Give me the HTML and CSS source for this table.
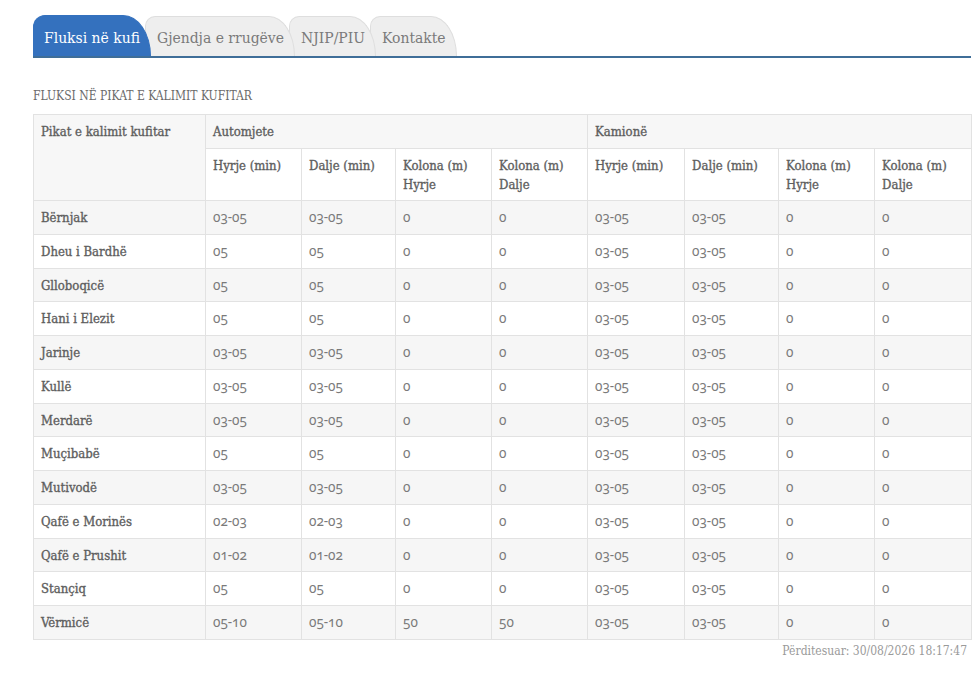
FILE: index.html
```html
<!DOCTYPE html>
<html lang="sq">
<head>
<meta charset="utf-8">
<title>Fluksi në kufi</title>
<link rel="stylesheet" href="styles.css">
</head>
<body>
<div class="page">
  <nav class="tabs">
    <a class="tab active">Fluksi në kufi</a>
    <a class="tab">Gjendja e rrugëve</a>
    <a class="tab">NJIP/PIU</a>
    <a class="tab">Kontakte</a>
  </nav>

  <h2 class="title">FLUKSI NË PIKAT E KALIMIT KUFITAR</h2>

  <table class="flux">
    <colgroup>
      <col class="c-name">
      <col class="c96"><col class="c94"><col class="c96"><col class="c96">
      <col class="c97"><col class="c94"><col class="c96"><col class="c97">
    </colgroup>
    <thead>
      <tr class="h1">
        <th rowspan="2">Pikat e kalimit kufitar</th>
        <th colspan="4">Automjete</th>
        <th colspan="4">Kamionë</th>
      </tr>
      <tr class="h2">
        <th>Hyrje (min)</th><th>Dalje (min)</th><th>Kolona (m)<br>Hyrje</th><th>Kolona (m)<br>Dalje</th>
        <th>Hyrje (min)</th><th>Dalje (min)</th><th>Kolona (m)<br>Hyrje</th><th>Kolona (m)<br>Dalje</th>
      </tr>
    </thead>
    <tbody>
      <tr><th>Bërnjak</th><td>03-05</td><td>03-05</td><td>0</td><td>0</td><td>03-05</td><td>03-05</td><td>0</td><td>0</td></tr>
      <tr><th>Dheu i Bardhë</th><td>05</td><td>05</td><td>0</td><td>0</td><td>03-05</td><td>03-05</td><td>0</td><td>0</td></tr>
      <tr><th>Glloboqicë</th><td>05</td><td>05</td><td>0</td><td>0</td><td>03-05</td><td>03-05</td><td>0</td><td>0</td></tr>
      <tr><th>Hani i Elezit</th><td>05</td><td>05</td><td>0</td><td>0</td><td>03-05</td><td>03-05</td><td>0</td><td>0</td></tr>
      <tr><th>Jarinje</th><td>03-05</td><td>03-05</td><td>0</td><td>0</td><td>03-05</td><td>03-05</td><td>0</td><td>0</td></tr>
      <tr><th>Kullë</th><td>03-05</td><td>03-05</td><td>0</td><td>0</td><td>03-05</td><td>03-05</td><td>0</td><td>0</td></tr>
      <tr><th>Merdarë</th><td>03-05</td><td>03-05</td><td>0</td><td>0</td><td>03-05</td><td>03-05</td><td>0</td><td>0</td></tr>
      <tr><th>Muçibabë</th><td>05</td><td>05</td><td>0</td><td>0</td><td>03-05</td><td>03-05</td><td>0</td><td>0</td></tr>
      <tr><th>Mutivodë</th><td>03-05</td><td>03-05</td><td>0</td><td>0</td><td>03-05</td><td>03-05</td><td>0</td><td>0</td></tr>
      <tr><th>Qafë e Morinës</th><td>02-03</td><td>02-03</td><td>0</td><td>0</td><td>03-05</td><td>03-05</td><td>0</td><td>0</td></tr>
      <tr><th>Qafë e Prushit</th><td>01-02</td><td>01-02</td><td>0</td><td>0</td><td>03-05</td><td>03-05</td><td>0</td><td>0</td></tr>
      <tr><th>Stançiq</th><td>05</td><td>05</td><td>0</td><td>0</td><td>03-05</td><td>03-05</td><td>0</td><td>0</td></tr>
      <tr><th>Vërmicë</th><td>05-10</td><td>05-10</td><td>50</td><td>50</td><td>03-05</td><td>03-05</td><td>0</td><td>0</td></tr>
    </tbody>
  </table>

  <p class="updated">Përditesuar: 30/08/2026 18:17:47</p>
</div>
</body>
</html>
```
FILE: styles.css
```css
html, body {
  margin: 0;
  padding: 0;
  background: #fff;
}

.page {
  width: 938px;
  padding: 15px 0 0 33px;
  font-family: "DejaVu Serif Condensed", "DejaVu Serif", serif;
  color: #666;
}

/* Tabs */
.tabs {
  display: flex;
  align-items: flex-end;
  height: 41px;
  border-bottom: 2px solid #3f6e98;
}

.tab {
  position: relative;
  display: block;
  height: 40px;
  line-height: 42px;
  padding: 0 10px 0 11px;
  margin-left: -6px;
  font-size: 15.5px;
  color: #7a7a7a;
  background: #eeeeee;
  border: 1px solid #dedede;
  border-bottom: none;
  border-radius: 10px 26px 0 0 / 10px 40px 0 0;
  box-sizing: border-box;
  white-space: nowrap;
  cursor: pointer;
}

.tab:nth-child(2) { z-index: 3; }
.tab:nth-child(3) { z-index: 2; }
.tab:nth-child(4) { z-index: 1; }

.tab.active {
  margin-left: 0;
  z-index: 5;
  height: 41px;
  line-height: 44px;
  color: #fff;
  background: #3471be;
  border-color: #3471be;
  padding: 0 10px 0 10px;
  border-radius: 12px 28px 0 0 / 12px 41px 0 0;
}

/* Title */
.title {
  margin: 30px 0 0;
  font-size: 12px;
  font-weight: normal;
  line-height: 16px;
  color: #6a6a6a;
}

/* Table */
.flux {
  margin-top: 10px;
  width: 938px;
  border-collapse: collapse;
  table-layout: fixed;
  border: 1px solid #e0e0e0;
  font-size: 13px;
}

.c-name { width: 172px; }
.c96 { width: 96px; }
.c94 { width: 94px; }
.c97 { width: 97px; }

.flux th,
.flux td {
  border: 1px solid #e2e2e2;
  padding: 7px 7px 6.75px;
  line-height: 19px;
  text-align: left;
  vertical-align: middle;
}

.flux th {
  font-weight: normal;
  color: #5e5e5e;
  -webkit-text-stroke: 0.35px #5e5e5e;
}

.flux thead th {
  vertical-align: top;
}

.flux .h1 th {
  background: #f7f7f7;
  padding: 7px 7px 7px;
}

.flux .h2 th {
  background: #fff;
  padding: 7px 7px 6px;
}

.flux tbody td {
  font-family: "Noto Sans", "Open Sans", sans-serif;
  font-variant-numeric: oldstyle-nums;
  font-weight: 400;
  font-size: 13.5px;
  color: #7a7a7a;
}

.flux tbody tr:nth-child(odd) th,
.flux tbody tr:nth-child(odd) td {
  background: #f6f6f6;
}

.updated {
  margin: 2px 4px 0 0;
  text-align: right;
  font-size: 12px;
  line-height: 18px;
  color: #9a9a9a;
}
```
